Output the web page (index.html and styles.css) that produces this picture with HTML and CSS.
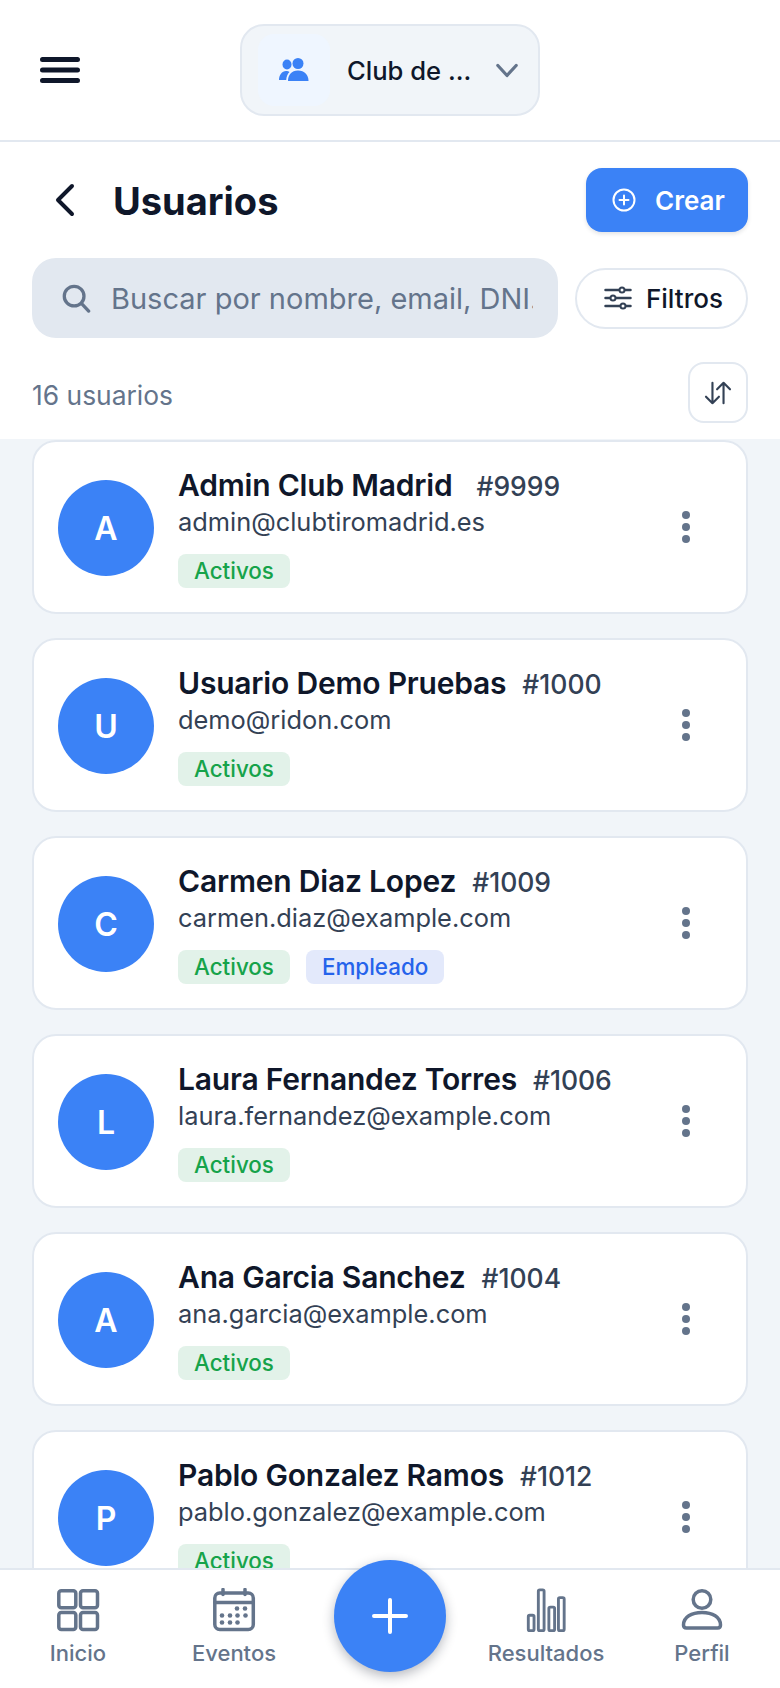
FILE: index.html
```html
<!DOCTYPE html>
<html lang="es">
<head>
  <meta charset="UTF-8" />
  <meta name="viewport" content="width=device-width, initial-scale=1" />
  <title>Usuarios</title>
  <link rel="stylesheet" href="styles.css">
</head>
<body>
  <div class="app">
    <header class="topbar">
      <button class="menu-btn" aria-label="Menu">
        <svg viewBox="0 0 40 28" width="40" height="28"><path d="M2.5 3.5h35M2.5 14h35M2.5 24.500h35" fill="none" stroke="#0f172a" stroke-width="5" stroke-linecap="round"/></svg>
      </button>
      <div class="club-select">
        <span class="club-icon">
          <svg viewBox="0 0 32 24" width="32" height="24" fill="#3b82f6">
            <ellipse cx="9" cy="6.500" rx="4.500" ry="5"/>
            <ellipse cx="20" cy="5.500" rx="5.500" ry="5.500"/>
            <path d="M1 22c0-5 3-9 7-9 1.500 0 2.500.3 3.500 1-2 2-3 4.500-3.300 8z"/>
            <path d="M10 23c0-6 3.500-10.500 10-10.500S30.500 17 30.500 23z"/>
          </svg>
        </span>
        <span class="club-name">Club de ...</span>
        <svg class="club-chevron" viewBox="0 0 24 16" width="22" height="15"><path d="M2 2.500l10 11 10-11" fill="none" stroke="#64748b" stroke-width="3.500" stroke-linecap="round" stroke-linejoin="round"/></svg>
      </div>
      <span></span>
    </header>

    <section class="toolbar">
      <div class="title-row">
        <div class="title-left">
          <svg viewBox="0 0 22 34" width="22" height="34"><path d="M18 3L4 17l14 14" fill="none" stroke="#0f172a" stroke-width="4" stroke-linecap="round" stroke-linejoin="round"/></svg>
          <h1>Usuarios</h1>
        </div>
        <button class="create-btn">
          <svg viewBox="0 0 24 24" width="24" height="24" fill="none" stroke="#fff" stroke-width="2" stroke-linecap="round"><circle cx="12" cy="12" r="10.500"/><path d="M12 7.500v9M7.500 12h9"/></svg>
          Crear
        </button>
      </div>

      <div class="search-row">
        <label class="search-box">
          <svg viewBox="0 0 32 32" width="30" height="30" fill="none" stroke="#64748b" stroke-width="3.500" stroke-linecap="round"><circle cx="14" cy="14" r="10.500"/><path d="M22 22l7.500 8"/></svg>
          <input type="text" placeholder="Buscar por nombre, email, DNI...">
        </label>
        <button class="filter-btn">
          <svg viewBox="0 0 28 24" width="28" height="24" fill="none" stroke="#334155" stroke-width="2.500" stroke-linecap="round"><path d="M1.500 4h25M1.500 12h25M1.500 20h25"/><circle cx="18" cy="4" r="2.500" fill="#fff" stroke-width="2"/><circle cx="9" cy="12" r="2.500" fill="#fff" stroke-width="2"/><circle cx="19" cy="20" r="2.500" fill="#fff" stroke-width="2"/></svg>
          Filtros
        </button>
      </div>

      <div class="count-row">
        <span class="count">16 usuarios</span>
        <button class="sort-btn" aria-label="Ordenar">
          <svg viewBox="0 0 30 26" width="28" height="24" fill="none" stroke="#334155" stroke-width="2.300" stroke-linecap="round" stroke-linejoin="round"><path d="M9 2v22M2 17l7 7 7-7"/><path d="M21 24V2M14 9l7-7 7 7"/></svg>
        </button>
      </div>
    </section>

    <main class="user-list">
      <article class="user-card">
        <div class="avatar">A</div>
        <div class="user-info">
          <div class="user-head"><span class="user-name">Admin Club Madrid</span><span class="user-id wide">#9999</span></div>
          <div class="user-email">admin@clubtiromadrid.es</div>
          <div class="tags"><span class="tag tag-green">Activos</span></div>
        </div>
        <span class="more"><i></i><i></i><i></i></span>
      </article>
      <article class="user-card">
        <div class="avatar">U</div>
        <div class="user-info">
          <div class="user-head"><span class="user-name">Usuario Demo Pruebas</span><span class="user-id">#1000</span></div>
          <div class="user-email">demo@ridon.com</div>
          <div class="tags"><span class="tag tag-green">Activos</span></div>
        </div>
        <span class="more"><i></i><i></i><i></i></span>
      </article>
      <article class="user-card">
        <div class="avatar">C</div>
        <div class="user-info">
          <div class="user-head"><span class="user-name">Carmen Diaz Lopez</span><span class="user-id">#1009</span></div>
          <div class="user-email">carmen.diaz@example.com</div>
          <div class="tags"><span class="tag tag-green">Activos</span><span class="tag tag-blue">Empleado</span></div>
        </div>
        <span class="more"><i></i><i></i><i></i></span>
      </article>
      <article class="user-card">
        <div class="avatar">L</div>
        <div class="user-info">
          <div class="user-head"><span class="user-name">Laura Fernandez Torres</span><span class="user-id">#1006</span></div>
          <div class="user-email">laura.fernandez@example.com</div>
          <div class="tags"><span class="tag tag-green">Activos</span></div>
        </div>
        <span class="more"><i></i><i></i><i></i></span>
      </article>
      <article class="user-card">
        <div class="avatar">A</div>
        <div class="user-info">
          <div class="user-head"><span class="user-name">Ana Garcia Sanchez</span><span class="user-id">#1004</span></div>
          <div class="user-email">ana.garcia@example.com</div>
          <div class="tags"><span class="tag tag-green">Activos</span></div>
        </div>
        <span class="more"><i></i><i></i><i></i></span>
      </article>
      <article class="user-card">
        <div class="avatar">P</div>
        <div class="user-info">
          <div class="user-head"><span class="user-name">Pablo Gonzalez Ramos</span><span class="user-id">#1012</span></div>
          <div class="user-email">pablo.gonzalez@example.com</div>
          <div class="tags"><span class="tag tag-green">Activos</span></div>
        </div>
        <span class="more"><i></i><i></i><i></i></span>
      </article>
    </main>

    <nav class="bottom-nav">
      <a class="nav-item">
        <svg viewBox="0 0 44 44" width="44" height="44" fill="none" stroke="#64748b" stroke-width="3.500" stroke-linejoin="round"><rect x="2.800" y="2.800" width="17" height="17" rx="2.500"/><rect x="24.500" y="2.800" width="17" height="17" rx="2.500"/><rect x="2.800" y="24.500" width="17" height="17" rx="2.500"/><rect x="24.500" y="24.500" width="17" height="17" rx="2.500"/></svg>
        Inicio
      </a>
      <a class="nav-item">
        <svg viewBox="0 0 44 44" width="44" height="44" fill="none" stroke="#64748b" stroke-width="3.500" stroke-linecap="round"><rect x="2.800" y="5" width="38.500" height="36.500" rx="5"/><path d="M2.800 14.500h38.500M11 1.500v5M33 1.500v5"/><g fill="#64748b" stroke="none"><circle cx="25" cy="20.500" r="2.300"/><circle cx="33" cy="20.500" r="2.300"/><circle cx="10" cy="27.500" r="2.300"/><circle cx="18" cy="27.500" r="2.300"/><circle cx="25.500" cy="27.500" r="2.300"/><circle cx="33.500" cy="27.500" r="2.300"/><circle cx="10" cy="34.500" r="2.300"/><circle cx="18" cy="34.500" r="2.300"/><circle cx="25.500" cy="34.500" r="2.300"/></g></svg>
        Eventos
      </a>
      <span></span>
      <a class="nav-item">
        <svg viewBox="0 0 44 46" width="44" height="44" fill="none" stroke="#64748b" stroke-width="3" stroke-linejoin="round"><rect x="3.500" y="28.500" width="6" height="16" rx="1.500"/><rect x="14" y="2" width="6" height="42.500" rx="1.500"/><rect x="25" y="20" width="6" height="24.500" rx="1.500"/><rect x="35" y="10" width="6" height="34.500" rx="1.500"/></svg>
        Resultados
      </a>
      <a class="nav-item">
        <svg viewBox="0 0 44 44" width="44" height="44" fill="none" stroke="#64748b" stroke-width="3.500" stroke-linejoin="round"><circle cx="22" cy="11.500" r="8.800"/><path d="M3.500 37c0-8 8-12.500 18.500-12.500S40.500 29 40.500 37c0 2-1 3-3 3h-31c-2 0-3-1-3-3z"/></svg>
        Perfil
      </a>
    </nav>

    <button class="fab" aria-label="Nuevo">
      <svg viewBox="0 0 36 36" width="36" height="36"><path d="M18 2v32M2 18h32" stroke="#fff" stroke-width="4" stroke-linecap="round"/></svg>
    </button>
  </div>
</body>
</html>
```

FILE: styles.css
```css
* {
  box-sizing: border-box;
}

body {
  margin: 0;
  background: #f1f5f9;
  color: #0f172a;
  font-family: Inter, "Liberation Sans", sans-serif;
}

button {
  font-family: inherit;
  cursor: pointer;
}

.app {
  position: relative;
  display: flex;
  flex-direction: column;
  height: 1688px;
  overflow: hidden;
}

.topbar {
  display: grid;
  grid-template-columns: 1fr 300px 1fr;
  align-items: center;
  height: 142px;
  padding: 0 40px;
  background: #fff;
  border-bottom: 2px solid #e2e8f0;
}

.menu-btn {
  display: flex;
  width: 40px;
  padding: 0;
  background: none;
  border: none;
}

.club-select {
  display: flex;
  align-items: center;
  height: 92px;
  padding: 0 20px 0 16px;
  background: #f1f5f9;
  border: 2px solid #e2e8f0;
  border-radius: 24px;
}

.club-icon {
  display: flex;
  align-items: center;
  justify-content: center;
  flex: none;
  width: 72px;
  height: 72px;
  background: #eff6ff;
  border-radius: 16px;
}

.club-name {
  flex: 1;
  margin-left: 17px;
  font-size: 25.6px;
  font-weight: 500;
  white-space: nowrap;
}

.toolbar {
  display: flex;
  flex-direction: column;
  height: 297px;
  padding: 26px 32px 0;
  background: #fff;
}

.title-row,
.count-row,
.search-row {
  display: flex;
  align-items: center;
  justify-content: space-between;
}

.title-left {
  display: flex;
  align-items: center;
  gap: 37px;
  padding-left: 22px;
}

h1 {
  margin: 2px 0 0;
  font-size: 38px;
  font-weight: 700;
}

.create-btn {
  display: flex;
  align-items: center;
  gap: 19px;
  width: 162px;
  height: 64px;
  padding: 0 0 0 26px;
  color: #fff;
  font-size: 26px;
  font-weight: 600;
  background: #3b82f6;
  border: none;
  border-radius: 16px;
  box-shadow: 0 2px 4px rgba(15, 23, 42, 0.12);
}

.search-row {
  margin-top: 26px;
}

.search-box {
  display: flex;
  align-items: center;
  gap: 20px;
  width: 526px;
  height: 80px;
  padding: 0 25px 0 29px;
  background: #e2e8f0;
  border-radius: 24px;
}

.search-box svg {
  flex: none;
}

.search-box input {
  flex: 1;
  min-width: 0;
  padding: 0;
  color: #0f172a;
  font-family: inherit;
  font-size: 29px;
  background: none;
  border: none;
  outline: none;
}

.search-box input::placeholder {
  color: #64748b;
  opacity: 1;
}

.filter-btn {
  display: flex;
  align-items: center;
  gap: 14px;
  width: 173px;
  height: 61px;
  padding: 0 0 0 27px;
  color: #0f172a;
  font-size: 26px;
  font-weight: 500;
  background: #fff;
  border: 2px solid #e2e8f0;
  border-radius: 31px;
}

.count-row {
  margin-top: 24px;
}

.count {
  padding-top: 4px;
  color: #64748b;
  font-size: 26.4px;
}

.sort-btn {
  display: flex;
  align-items: center;
  justify-content: center;
  width: 60px;
  height: 61px;
  padding: 0;
  background: #fff;
  border: 2px solid #e2e8f0;
  border-radius: 16px;
}

.user-list {
  display: flex;
  flex: 1;
  flex-direction: column;
  gap: 24px;
  min-height: 0;
  padding: 1px 32px 0;
  overflow: hidden;
}

.user-card {
  display: flex;
  flex: none;
  align-items: center;
  height: 174px;
  padding: 0 24px;
  background: #fff;
  border: 2px solid #e2e8f0;
  border-radius: 24px;
}

.avatar {
  display: flex;
  align-items: center;
  justify-content: center;
  flex: none;
  width: 96px;
  height: 96px;
  margin-top: 2px;
  color: #fff;
  font-size: 32px;
  font-weight: 600;
  background: #3b82f6;
  border-radius: 50%;
}

.user-info {
  flex: 1;
  margin-left: 24px;
}

.user-head {
  display: flex;
  align-items: baseline;
  gap: 16px;
  line-height: 38px;
}

.user-name {
  font-size: 30px;
  font-weight: 600;
  letter-spacing: -0.2px;
}

.user-id {
  color: #334155;
  font-size: 26.5px;
  font-weight: 500;
}

.user-id.wide {
  margin-left: 8px;
}

.user-email {
  margin-top: 1px;
  color: #334155;
  font-size: 25.4px;
  line-height: 32px;
}

.tags {
  display: flex;
  gap: 16px;
  margin-top: 16px;
}

.tag {
  height: 34px;
  padding: 0 16px;
  font-size: 22.4px;
  font-weight: 500;
  line-height: 34px;
  border-radius: 8px;
}

.tag-green {
  color: #16a34a;
  background: #e2f2e9;
}

.tag-blue {
  color: #2563eb;
  background: #e3e9fb;
}

.more {
  display: flex;
  flex-direction: column;
  gap: 4px;
  margin-right: 32px;
}

.more i {
  display: block;
  width: 8px;
  height: 8px;
  background: #64748b;
  border-radius: 50%;
}

.bottom-nav {
  display: grid;
  grid-template-columns: repeat(5, 1fr);
  flex: none;
  height: 120px;
  padding-top: 18px;
  background: #fff;
  border-top: 2px solid #e2e8f0;
}

.nav-item {
  display: flex;
  flex-direction: column;
  align-items: center;
  gap: 8px;
  color: #64748b;
  font-size: 22px;
  font-weight: 500;
  line-height: 26px;
}

.fab {
  position: absolute;
  left: 334px;
  top: 1560px;
  display: flex;
  align-items: center;
  justify-content: center;
  width: 112px;
  height: 112px;
  padding: 0;
  background: #3b82f6;
  border: none;
  border-radius: 50%;
  box-shadow: 0 4px 12px rgba(15, 23, 42, 0.3);
}
```
